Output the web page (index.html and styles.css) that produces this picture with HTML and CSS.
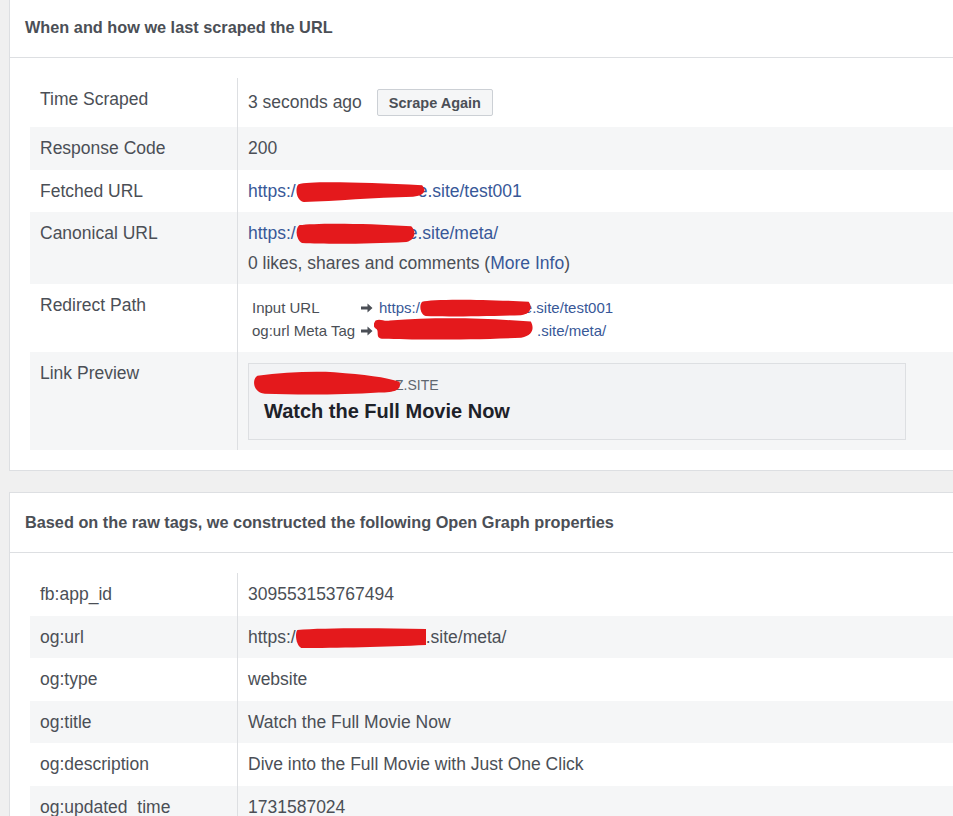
FILE: index.html
```html
<!DOCTYPE html>
<html lang="en">
<head>
<meta charset="utf-8">
<title>Sharing Debugger</title>
<link rel="stylesheet" href="styles.css">
</head>
<body>
<div class="page">

  <section class="card card--first">
    <h2 class="card__title">When and how we last scraped the URL</h2>
    <div class="card__body">
      <div class="kv">
        <div class="kv__row">
          <div class="kv__key">Time Scraped</div>
          <div class="kv__val kv__val--action">
            <span>3 seconds ago</span>
            <button class="btn" type="button">Scrape Again</button>
          </div>
        </div>
        <div class="kv__row">
          <div class="kv__key">Response Code</div>
          <div class="kv__val">200</div>
        </div>
        <div class="kv__row">
          <div class="kv__key">Fetched URL</div>
          <div class="kv__val"><a class="link" href="#">https:/<svg class="redact redact--overlap" width="130" height="21" viewBox="0 0 100 20" preserveAspectRatio="none"><path d="M2 3 C10 0 50 1 97 4 C100 8 100 14 90 15 C60 16 30 19 6 20 C0 19 -1 6 2 3Z"/></svg>e.site/test001</a></div>
        </div>
        <div class="kv__row">
          <div class="kv__key">Canonical URL</div>
          <div class="kv__val">
            <div><a class="link" href="#">https:/<svg class="redact redact--overlap" width="120" height="21" viewBox="0 0 100 20" preserveAspectRatio="none"><path d="M3 2 C15 0 55 0 96 3 C100 7 100 16 92 18 C60 20 25 20 5 19 C0 16 -1 5 3 2Z"/></svg>e.site/meta/</a></div>
            <div class="kv__sub">0 likes, shares and comments (<a class="link" href="#">More Info</a>)</div>
          </div>
        </div>
        <div class="kv__row">
          <div class="kv__key">Redirect Path</div>
          <div class="kv__val kv__val--redirect">
            <div class="redirect">
              <span class="redirect__label">Input URL</span>
              <svg class="redirect__arrow" width="12" height="10" viewBox="0 0 12 10"><path d="M0 3.6 H6.5 V0.5 L11.5 5 L6.5 9.5 V6.4 H0Z"/></svg>
              <a class="link" href="#">https:/<svg class="redact redact--small redact--overlap" width="112" height="18" viewBox="0 0 100 20" preserveAspectRatio="none"><path d="M2 3 C10 0 50 0 97 3 C100 8 100 16 90 18 C60 19 25 20 5 19 C0 17 -1 6 2 3Z"/></svg>e.site/test001</a>
              <span class="redirect__label">og:url Meta Tag</span>
              <svg class="redirect__arrow" width="12" height="10" viewBox="0 0 12 10"><path d="M0 3.6 H6.5 V0.5 L11.5 5 L6.5 9.5 V6.4 H0Z"/></svg>
              <a class="link" href="#"><svg class="redact redact--small redact--wide" width="160" height="23" viewBox="0 0 100 20" preserveAspectRatio="none"><path d="M1 3 C4 1 6 4 10 3 C40 0 70 1 98 4 C100 9 100 16 92 18 C60 20 25 20 6 19 C0 19 4 12 1 10 C-1 8 0 5 1 3Z"/></svg>.site/meta/</a>
            </div>
          </div>
        </div>
        <div class="kv__row">
          <div class="kv__key">Link Preview</div>
          <div class="kv__val kv__val--preview">
            <div class="preview">
              <div class="preview__domain"><svg class="redact redact--lead" width="148" height="24" viewBox="0 0 100 20" preserveAspectRatio="none"><path d="M3 4 C20 1 40 0 55 1 C75 3 90 5 99 9 C100 14 99 18 85 18 C60 20 30 20 8 19 C0 18 -1 7 3 4Z"/></svg>Z.SITE</div>
              <div class="preview__title">Watch the Full Movie Now</div>
            </div>
          </div>
        </div>
      </div>
    </div>
  </section>

  <section class="card">
    <h2 class="card__title">Based on the raw tags, we constructed the following Open Graph properties</h2>
    <div class="card__body">
      <div class="kv">
        <div class="kv__row">
          <div class="kv__key">fb:app_id</div>
          <div class="kv__val">309553153767494</div>
        </div>
        <div class="kv__row">
          <div class="kv__key">og:url</div>
          <div class="kv__val">https:/<svg class="redact" width="130" height="20" viewBox="0 0 100 20" preserveAspectRatio="none"><path d="M1 2 C20 0 60 0 100 1 L100 17 C70 19 30 20 4 20 C0 17 -1 6 1 2Z"/></svg>.site/meta/</div>
        </div>
        <div class="kv__row">
          <div class="kv__key">og:type</div>
          <div class="kv__val">website</div>
        </div>
        <div class="kv__row">
          <div class="kv__key">og:title</div>
          <div class="kv__val">Watch the Full Movie Now</div>
        </div>
        <div class="kv__row">
          <div class="kv__key">og:description</div>
          <div class="kv__val">Dive into the Full Movie with Just One Click</div>
        </div>
        <div class="kv__row">
          <div class="kv__key">og:updated_time</div>
          <div class="kv__val">1731587024</div>
        </div>
      </div>
    </div>
  </section>

</div>
</body>
</html>
```

FILE: styles.css
```css
html, body {
  overflow: hidden;
}

body {
  margin: 0;
  background: #f0f0f0;
  font-family: "Liberation Sans", Arial, Helvetica, sans-serif;
  color: #4b4f56;
}

.page {
  width: 1060px;
  padding-left: 9px;
}

.card {
  background: #fff;
  border: 1px solid #dddfe2;
}

.card--first {
  margin-top: -3px;
}

.card + .card {
  margin-top: 21px;
}

.card__title {
  margin: 0;
  padding: 19px 15px 20px;
  font-size: 16.3px;
  line-height: 20px;
  font-weight: bold;
  color: #4b4f56;
  border-bottom: 1px solid #dddfe2;
}

.card__body {
  padding: 20px;
}

.kv__row {
  display: grid;
  grid-template-columns: 208px 1fr;
  font-size: 17.5px;
  line-height: 22.5px;
}

.kv__row:nth-child(even) {
  background: #f5f6f7;
}

.kv__key {
  padding: 10px;
  border-right: 1px solid #dddfe2;
  color: #4b4f56;
}

.kv__val {
  padding: 10px;
  color: #4b4f56;
}

.kv__val--action {
  display: flex;
  align-items: center;
  padding-top: 11px;
  padding-bottom: 11px;
}

.kv__sub {
  margin-top: 7px;
}

.link {
  color: #385898;
  text-decoration: none;
}

.btn {
  margin-left: 15px;
  height: 27px;
  padding: 0 11px;
  font-family: inherit;
  font-size: 14.5px;
  font-weight: bold;
  color: #4b4f56;
  background: #f5f6f7;
  border: 1px solid #ccd0d5;
  border-radius: 2px;
}

.redact {
  position: relative;
  vertical-align: 1px;
  margin-top: -6px;
  margin-bottom: -6px;
  fill: #e4191c;
}

.redact--overlap {
  margin-right: -8px;
}

.redact--small {
  vertical-align: 2px;
}

.redact--wide {
  margin-left: -5px;
  margin-right: 3px;
}

.redact--lead {
  margin-left: -11px;
  margin-right: -6px;
  vertical-align: 1px;
}

.kv__val--redirect {
  padding-top: 12px;
  padding-left: 14px;
}

.redirect {
  display: grid;
  grid-template-columns: 109px 18px auto;
  grid-auto-rows: 23px;
  justify-content: start;
  align-items: center;
  font-size: 15px;
  line-height: 23px;
}

.redirect__arrow {
  fill: #4b4f56;
}

.kv__val--preview {
  padding-top: 11px;
  padding-bottom: 10px;
}

.preview {
  box-sizing: border-box;
  width: 658px;
  padding: 12px 15px 16px;
  background: #f2f3f5;
  border: 1px solid #dddfe2;
}

.preview__domain {
  font-size: 14px;
  line-height: 18px;
  color: #606770;
  text-transform: uppercase;
}

.preview__title {
  margin-top: 5px;
  font-size: 20px;
  line-height: 24px;
  font-weight: bold;
  color: #1d2129;
}
```
